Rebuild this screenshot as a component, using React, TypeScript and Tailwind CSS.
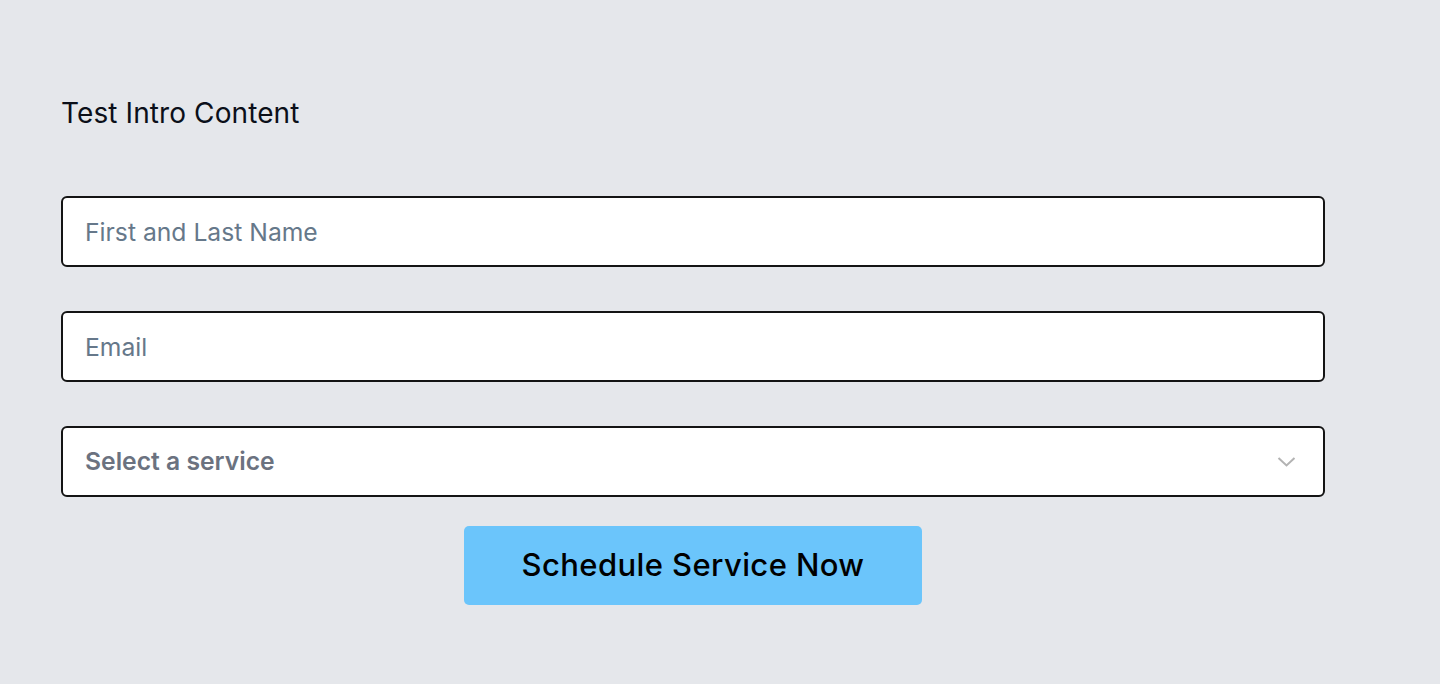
export default function App() {
  return (
    <div className="min-h-[684px] w-full bg-[#e5e7eb] pl-[61px] pt-[94px]" style={{ fontFamily: 'Inter, "Noto Sans", sans-serif' }}>
      <h2 className="text-[28px] leading-[38px] text-[#0b0f19] font-normal tracking-[0.1px]">Test Intro Content</h2>
      <form className="mt-[64px] w-[1264px] flex flex-col" onSubmit={(e) => e.preventDefault()}>
        <input
          type="text"
          placeholder="First and Last Name"
          className="h-[71px] w-full rounded-[6px] border-2 border-[#141414] bg-white px-[22px] text-[24.7px] outline-none placeholder:text-[#66788a]"
        />
        <input
          type="email"
          placeholder="Email"
          className="mt-[44px] h-[71px] w-full rounded-[6px] border-2 border-[#141414] bg-white px-[22px] text-[24.7px] outline-none placeholder:text-[#66788a]"
        />
        <div className="relative mt-[44px] h-[71px] w-full rounded-[6px] border-2 border-[#141414] bg-white flex items-center px-[22px]">
          <span className="text-[24.7px] font-semibold text-[#6b7280]">Select a service</span>
          <svg className="absolute right-[27px] top-1/2 -translate-y-1/2" width="19" height="11" viewBox="0 0 19 11" fill="none">
            <path d="M1.5 1.5 L9.5 9 L17.5 1.5" stroke="#b3b3b3" strokeWidth="2" />
          </svg>
        </div>
        <div className="mt-[29px] flex justify-center">
          <button
            type="submit"
            className="h-[79px] w-[458px] rounded-[5px] bg-[#6bc5fb] text-[31px] font-medium tracking-[0.4px] text-black"
          >
            Schedule Service Now
          </button>
        </div>
      </form>
    </div>
  );
}
